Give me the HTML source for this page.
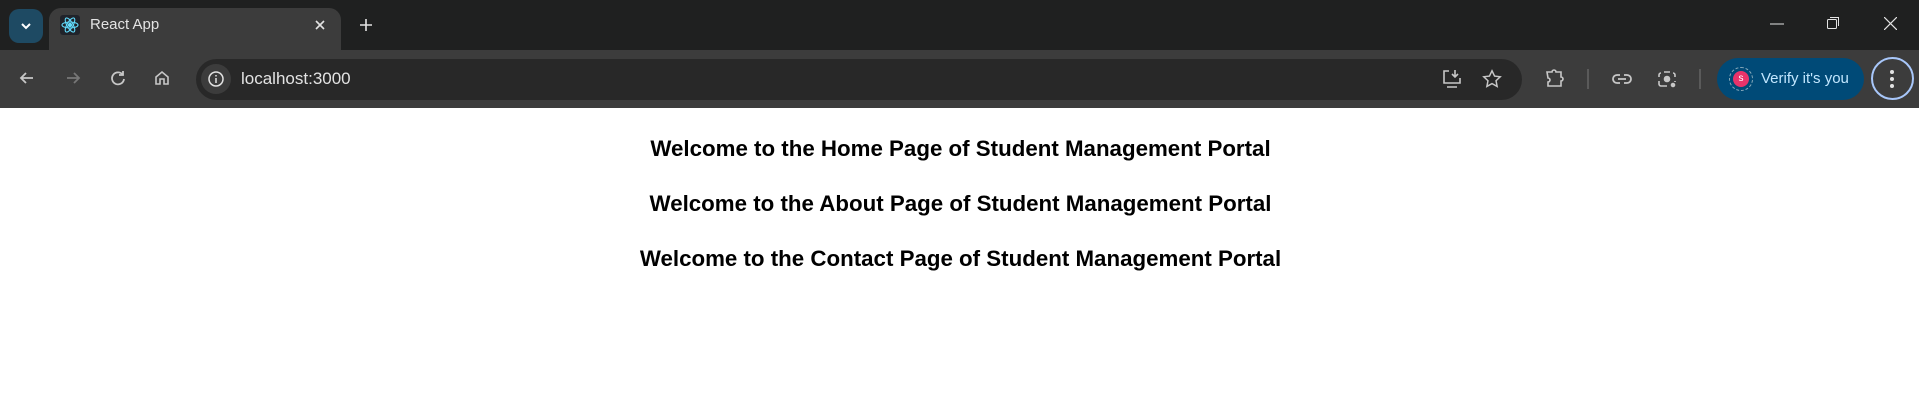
<!DOCTYPE html>
<html><head><meta charset="utf-8"><style>
*{margin:0;padding:0;box-sizing:border-box}
body{width:1919px;height:419px;overflow:hidden;background:#fff;font-family:"Liberation Sans",sans-serif;position:relative}
.top{position:absolute;left:0;top:0;width:1919px;height:50px;background:#1f2020}
.tb{position:absolute;left:0;top:50px;width:1919px;height:58px;background:#3c3c3c}
.abs{position:absolute}
.hd{position:absolute;left:0;width:1919px;text-align:center;font-weight:bold;font-size:22.3px;color:#000;padding-left:2px}
</style></head><body>
<div class="top"></div>
<div class="abs" style="left:9px;top:9px;width:34px;height:34px;background:#1e4a63;border-radius:10px"></div>
<svg class="abs" style="left:19px;top:19px" width="14" height="14" viewBox="0 0 14 14"><path d="M3 5l4 4 4-4" stroke="#fff" stroke-width="2" fill="none"/></svg>
<div class="abs" style="left:49px;top:8px;width:292px;height:50px;background:#3c3c3c;border-radius:12px 12px 0 0"></div>
<div class="abs" style="left:60px;top:15px;width:20px;height:20px;background:#20232a;border-radius:3px"></div>
<svg class="abs" style="left:60px;top:15px" width="20" height="20" viewBox="-10 -10 20 20" fill="none" stroke="#61dafb" stroke-width="1.1"><ellipse rx="8" ry="3"/><ellipse rx="8" ry="3" transform="rotate(60)"/><ellipse rx="8" ry="3" transform="rotate(120)"/><circle r="1.6" fill="#61dafb"/></svg>
<div class="abs" style="left:90px;top:16px;color:#e3e3e3;font-size:15px">React App</div>
<svg class="abs" style="left:314px;top:19px" width="12" height="12" viewBox="0 0 12 12"><path d="M2 2l8 8M10 2l-8 8" stroke="#e3e3e3" stroke-width="1.6"/></svg>
<svg class="abs" style="left:359px;top:18px" width="14" height="14" viewBox="0 0 14 14"><path d="M7 1v12M1 7h12" stroke="#e3e3e3" stroke-width="1.6"/></svg>
<svg class="abs" style="left:1770px;top:23px" width="14" height="2"><path d="M0 1h14" stroke="#e3e3e3"/></svg>
<svg class="abs" style="left:1827px;top:17px" width="13" height="13" viewBox="0 0 13 13" fill="none" stroke="#e3e3e3"><rect x="0.5" y="2.5" width="9" height="9" rx="1"/><path d="M3 .5h8.5V9"/></svg>
<svg class="abs" style="left:1884px;top:17px" width="13" height="13"><path d="M0 0l13 13M13 0L0 13" stroke="#e3e3e3" stroke-width="1.2"/></svg>
<div class="tb"></div>
<svg class="abs" style="left:17px;top:68px" width="20" height="20" viewBox="0 0 20 20" fill="none" stroke="#c7c7c7" stroke-width="1.8"><path d="M16 10H4M9 5l-5 5 5 5"/></svg>
<svg class="abs" style="left:63px;top:68px" width="20" height="20" viewBox="0 0 20 20" fill="none" stroke="#777" stroke-width="1.8"><path d="M4 10h12M11 5l5 5-5 5"/></svg>
<svg class="abs" style="left:108px;top:68px" width="20" height="20" viewBox="0 0 20 20" fill="none" stroke="#c7c7c7" stroke-width="1.8"><path d="M15 7a6 6 0 1 0 1 4"/><path d="M15 3v4h-4"/></svg>
<svg class="abs" style="left:152px;top:68px" width="20" height="20" viewBox="0 0 20 20" fill="none" stroke="#c7c7c7" stroke-width="1.6"><path d="M4 9l6-5 6 5v7h-4v-5H8v5H4z"/></svg>
<div class="abs" style="left:196px;top:59px;width:1326px;height:41px;background:#282828;border-radius:21px"></div>
<div class="abs" style="left:201px;top:64px;width:30px;height:30px;background:#3c3c3c;border-radius:15px"></div>
<svg class="abs" style="left:206px;top:69px" width="20" height="20" viewBox="0 0 20 20" fill="none" stroke="#e3e3e3" stroke-width="1.5"><circle cx="10" cy="10" r="7"/><path d="M10 9v5M10 6v1.5"/></svg>
<div class="abs" style="left:241px;top:69px;color:#e3e3e3;font-size:17px">localhost:3000</div>
<svg class="abs" style="left:1441px;top:68px" width="22" height="22" viewBox="0 0 22 22" fill="none" stroke="#c7c7c7" stroke-width="1.6"><path d="M8 3H3v12h16V10M6 19h10M14 2v7M11 6l3 3 3-3"/></svg>
<svg class="abs" style="left:1481px;top:68px" width="22" height="22" viewBox="0 0 24 24" fill="none" stroke="#c7c7c7" stroke-width="1.6"><path d="M12 3l2.8 5.8 6.2.8-4.6 4.3 1.2 6.2L12 17l-5.6 3.1 1.2-6.2L3 9.6l6.2-.8z"/></svg>
<svg class="abs" style="left:1544px;top:67px" width="22" height="22" viewBox="0 0 22 22" fill="none" stroke="#c7c7c7" stroke-width="1.6"><path d="M3 5h5a2 2 0 0 1 4 0h5v5a2 2 0 0 1 0 4v5H4v-4a2 2 0 0 0 0-4z"/></svg>
<div class="abs" style="left:1587px;top:69px;width:2px;height:20px;background:#5a5a5a"></div>
<svg class="abs" style="left:1611px;top:68px" width="22" height="22" viewBox="0 0 22 22" fill="none" stroke="#c7c7c7" stroke-width="1.8"><path d="M9 7H6a4 4 0 0 0 0 8h3M13 7h3a4 4 0 0 1 0 8h-3M7 11h8"/></svg>
<svg class="abs" style="left:1656px;top:68px" width="22" height="22" viewBox="0 0 22 22" fill="none" stroke="#c7c7c7" stroke-width="1.6"><path d="M8 4h6M3 9V7a2 2 0 0 1 2-2M19 9V7a2 2 0 0 0-2-2M3 13v3a2 2 0 0 0 2 2h6M19 13v1"/><circle cx="11" cy="11" r="2.5" fill="#c7c7c7"/><circle cx="17" cy="17" r="1.5" fill="#c7c7c7"/></svg>
<div class="abs" style="left:1699px;top:69px;width:2px;height:20px;background:#5a5a5a"></div>
<div class="abs" style="left:1717px;top:58px;width:147px;height:42px;background:#004a77;border-radius:21px"></div>
<div class="abs" style="left:1729px;top:67px;width:24px;height:24px;border:1.5px dashed #8ab;border-radius:12px"></div>
<div class="abs" style="left:1733px;top:71px;width:16px;height:16px;background:#e8336a;border-radius:8px;color:#fff;font-size:10px;text-align:center;line-height:16px">s</div>
<div class="abs" style="left:1761px;top:70px;color:#c2e7ff;font-size:15px">Verify it's you</div>
<div class="abs" style="left:1871px;top:57px;width:43px;height:43px;border:2px solid #a8c7fa;border-radius:22px"></div>
<svg class="abs" style="left:1888px;top:68px" width="8" height="22"><circle cx="4" cy="4" r="2" fill="#e3e3e3"/><circle cx="4" cy="11" r="2" fill="#e3e3e3"/><circle cx="4" cy="18" r="2" fill="#e3e3e3"/></svg>
<div class="hd" style="top:136px">Welcome to the Home Page of Student Management Portal</div>
<div class="hd" style="top:191px">Welcome to the About Page of Student Management Portal</div>
<div class="hd" style="top:246px">Welcome to the Contact Page of Student Management Portal</div>
</body></html>
